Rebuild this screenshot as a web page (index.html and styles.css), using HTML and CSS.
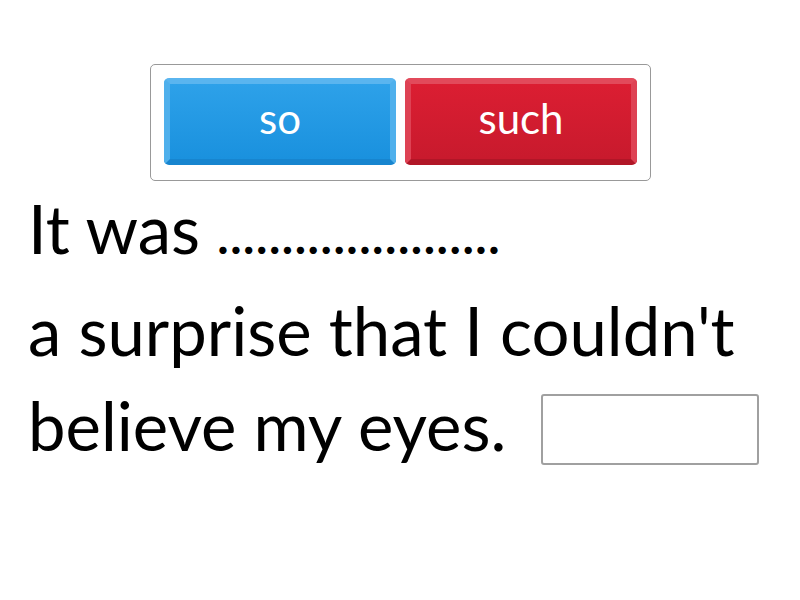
FILE: index.html
```html
<!DOCTYPE html>
<html>
<head>
<meta charset="utf-8">
<link rel="stylesheet" href="styles.css">
</head>
<body>
<div class="page">
  <div class="choices">
    <div class="btn btn-blue">so</div>
    <div class="btn btn-red">such</div>
  </div>
  <div class="sentence">
    <div class="line">It was <span class="dots">......................</span></div>
    <div class="line">a surprise that I couldn't</div>
    <div class="line">believe my eyes. <span class="blank"></span></div>
  </div>
</div>
</body>
</html>
```
FILE: styles.css
```css
html, body {
  margin: 0;
  padding: 0;
  background: #fff;
}
.page {
  width: 800px;
  padding-top: 64px;
  font-family: "Lato", "Noto Sans", sans-serif;
  color: #000;
}
.choices {
  box-sizing: border-box;
  width: 501px;
  height: 117px;
  margin-left: 150px;
  border: 1px solid #999;
  border-radius: 5px;
  padding: 13px;
  display: flex;
  gap: 9px;
}
.btn {
  box-sizing: border-box;
  flex: 1;
  height: 87px;
  border-radius: 5px;
  border-style: solid;
  border-width: 6px 6px 6px 6px;
  display: flex;
  align-items: center;
  justify-content: center;
  color: #fff;
  font-size: 42px;
  padding-bottom: 8px;
}
.btn-blue {
  background: linear-gradient(#2da1e9, #1a91de);
  border-color: #5ab5ef #4fb0ec #1785cf #4fb0ec;
}
.btn-red {
  background: linear-gradient(#db1e32, #c81a2d);
  border-color: #e24a5b #de4254 #b11627 #de4254;
}
.sentence {
  margin: 0 0 0 28px;
  font-size: 67px;
  line-height: 95px;
}
.line {
  white-space: nowrap;
}
.dots {
  font-size: 48px;
  font-weight: 700;
  letter-spacing: 1.5px;
}
.blank {
  display: inline-block;
  box-sizing: border-box;
  width: 218px;
  height: 71px;
  border: 2px solid #a0a0a0;
  border-radius: 3px;
  vertical-align: -14px;
  margin-left: 18px;
}
```
